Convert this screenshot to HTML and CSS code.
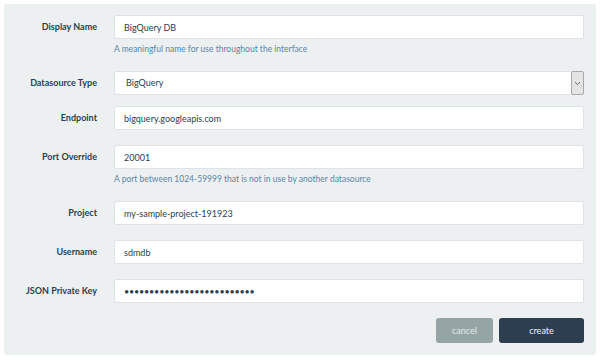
FILE: index.html
```html
<!DOCTYPE html>
<html lang="en">
<head>
  <meta charset="UTF-8" />
  <title>New Datasource</title>
  <link rel="stylesheet" href="styles.css">
</head>
<body>
<form class="panel">
  <div class="row">
    <label class="row-label">Display Name</label>
    <div class="field">
      <input type="text" class="text-input" value="BigQuery DB">
      <div class="help">A meaningful name for use throughout the interface</div>
    </div>
  </div>

  <div class="row row-select">
    <label class="row-label">Datasource Type</label>
    <div class="field">
      <div class="select">
        <span class="select-value">BigQuery</span>
        <span class="select-btn">
          <svg width="7" height="5" viewBox="0 0 7 5"><path d="M1 1.2 L3.5 3.6 L6 1.2" fill="none" stroke="#666" stroke-width="1"/></svg>
        </span>
      </div>
    </div>
  </div>

  <div class="row">
    <label class="row-label">Endpoint</label>
    <div class="field">
      <input type="text" class="text-input" value="bigquery.googleapis.com">
    </div>
  </div>

  <div class="row">
    <label class="row-label">Port Override</label>
    <div class="field">
      <input type="text" class="text-input" value="20001">
      <div class="help">A port between 1024-59999 that is not in use by another datasource</div>
    </div>
  </div>

  <div class="row">
    <label class="row-label">Project</label>
    <div class="field">
      <input type="text" class="text-input" value="my-sample-project-191923">
    </div>
  </div>

  <div class="row">
    <label class="row-label">Username</label>
    <div class="field">
      <input type="text" class="text-input" value="sdmdb">
    </div>
  </div>

  <div class="row">
    <label class="row-label">JSON Private Key</label>
    <div class="field">
      <input type="password" class="text-input secret" value="abcdefghijklmnopqrstuvwxyz">
    </div>
  </div>

  <div class="actions">
    <button type="button" class="btn btn-cancel">cancel</button>
    <button type="button" class="btn btn-create">create</button>
  </div>
</form>
</body>
</html>
```

FILE: styles.css
```css
body {
  margin: 0;
  padding: 4px;
  background: #ffffff;
  font-family: Lato, "Open Sans", sans-serif;
  color: #34495e;
}
.panel {
  background-color: #ecf0f1;
  border-radius: 3px;
  padding: 11px 12px 12px 0;
  width: 580px;
}
.row {
  display: flex;
  align-items: flex-start;
  margin-bottom: 15px;
}
.row-select {
  margin-bottom: 11px;
}
.row-label {
  width: 93px;
  flex: none;
  text-align: right;
  font-size: 9px;
  font-weight: bold;
  line-height: 24px;
  margin-right: 17px;
  color: #2c3e50;
}
.field {
  flex: 1;
}
.text-input {
  display: block;
  box-sizing: border-box;
  width: 100%;
  height: 24px;
  margin: 0;
  padding: 0 9px;
  font-family: Lato, "Open Sans", sans-serif;
  font-size: 9px;
  color: #2c3e50;
  background: #fff;
  border: 1px solid #dde3e7;
  border-radius: 2px;
  outline: none;
}
.secret {
  font-size: 9px;
  letter-spacing: -0.2px;
}
.help {
  margin-top: 4px;
  font-size: 8.5px;
  line-height: 13px;
  color: #5f84a8;
}
.select {
  display: flex;
  align-items: stretch;
  height: 24px;
  box-sizing: border-box;
  background: #fff;
  border: 1px solid #dde3e7;
  border-radius: 2px;
  font-size: 9px;
  color: #2c3e50;
}
.select-value {
  flex: 1;
  padding-left: 11px;
  line-height: 22px;
}
.select-btn {
  width: 11px;
  display: flex;
  align-items: center;
  justify-content: center;
  margin: -1px -1px -1px 0;
  background: #e4e4e4;
  border: 1px solid #a9a9a9;
  border-radius: 2px;
}
.actions {
  display: flex;
  justify-content: flex-end;
  gap: 6px;
}
.btn {
  height: 25px;
  border: none;
  border-radius: 3px;
  font-family: Lato, "Open Sans", sans-serif;
  font-size: 9px;
  cursor: pointer;
}
.btn-cancel {
  width: 57px;
  background-color: #95a5a6;
  color: #e3e9e9;
}
.btn-create {
  width: 85px;
  background-color: #2c3e50;
  color: #f1f3f5;
}
```
